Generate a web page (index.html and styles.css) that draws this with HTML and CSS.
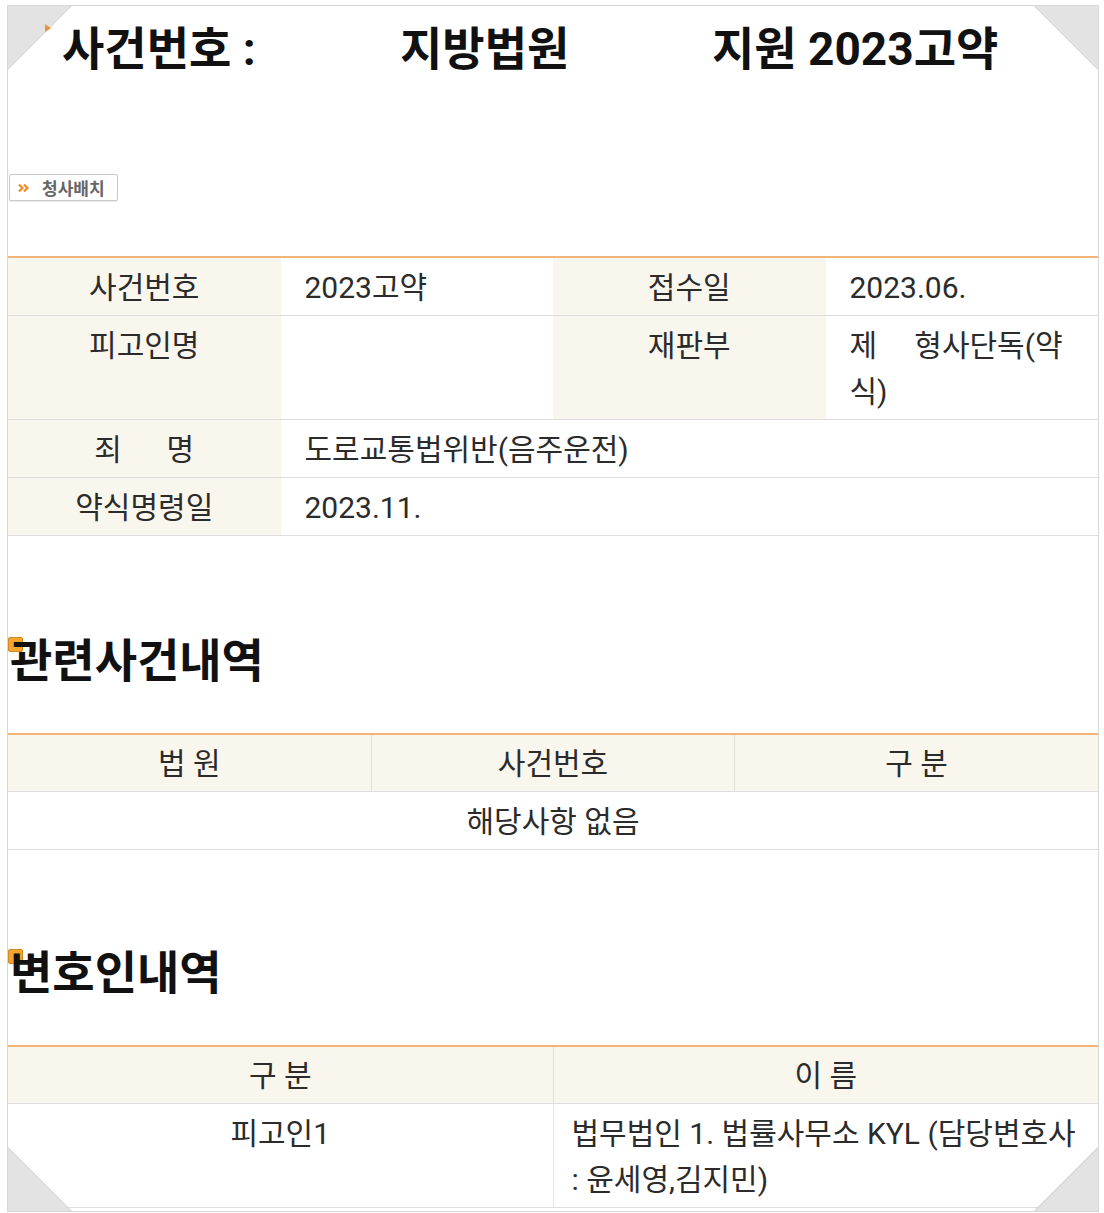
FILE: index.html
```html
<!DOCTYPE html>
<html lang="ko">
<head>
<meta charset="utf-8">
<title>사건번호</title>
<link rel="stylesheet" href="styles.css">
</head>
<body>
<div class="frame">
  <span class="corner tl"><svg width="66" height="66" viewBox="0 0 66 66"><polygon points="0.5,0.5 65,0.5 0.5,65" fill="#e3e3e3" stroke="#cfcfcf" stroke-width="1"/></svg></span>
  <span class="corner tr"><svg width="66" height="66" viewBox="0 0 66 66"><polygon points="1,0.5 65.5,0.5 65.5,65" fill="#e3e3e3" stroke="#cfcfcf" stroke-width="1"/></svg></span>
  <span class="corner bl"><svg width="66" height="66" viewBox="0 0 66 66"><polygon points="0.5,1 0.5,65.5 65,65.5" fill="#e3e3e3" stroke="#cfcfcf" stroke-width="1"/></svg></span>
  <span class="corner br"><svg width="66" height="66" viewBox="0 0 66 66"><polygon points="65.5,1 65.5,65.5 1,65.5" fill="#e3e3e3" stroke="#c4c4c4" stroke-width="1"/></svg></span>
  <span class="mark"></span>

  <h1 class="title">
    <span class="t1">사건번호 :</span>
    <span class="t2">지방법원</span>
    <span class="t3">지원 2023고약</span>
  </h1>

  <div class="btn-row">
    <span class="btn"><svg class="arr" width="12" height="10" viewBox="0 0 12 10"><path d="M1 1.5 L4.5 5 L1 8.5 M6 1.5 L9.5 5 L6 8.5" fill="none" stroke="#f08a24" stroke-width="2.2"/></svg>청사배치</span>
  </div>

  <table class="info">
    <colgroup><col class="c25"><col class="c25"><col class="c25"><col class="c25"></colgroup>
    <tr>
      <th>사건번호</th>
      <td>2023고약</td>
      <th>접수일</th>
      <td>2023.06.</td>
    </tr>
    <tr>
      <th>피고인명</th>
      <td></td>
      <th>재판부</th>
      <td>제&nbsp;&nbsp;&nbsp;&nbsp;&nbsp;형사단독(약식)</td>
    </tr>
    <tr>
      <th>죄&nbsp;&nbsp;&nbsp;&nbsp;&nbsp;&nbsp;명</th>
      <td colspan="3">도로교통법위반(음주운전)</td>
    </tr>
    <tr>
      <th>약식명령일</th>
      <td colspan="3">2023.11.</td>
    </tr>
  </table>

  <h2 class="sec first">관련사건내역</h2>

  <table class="list three">
    <tr>
      <th>법 원</th>
      <th>사건번호</th>
      <th>구 분</th>
    </tr>
    <tr>
      <td colspan="3" class="center">해당사항 없음</td>
    </tr>
  </table>

  <h2 class="sec">변호인내역</h2>

  <table class="list two">
    <tr>
      <th>구 분</th>
      <th>이 름</th>
    </tr>
    <tr>
      <td class="center">피고인1</td>
      <td class="left"><span class="nowrap">법무법인 1. 법률사무소 KYL (담당변호사</span><br>: 윤세영,김지민)</td>
    </tr>
  </table>
</div>
</body>
</html>
```

FILE: styles.css
```css
* { box-sizing: border-box; }

html, body {
  margin: 0;
  padding: 0;
  background: #ffffff;
}

body {
  font-family: Roboto, "Noto Sans CJK KR", "Noto Sans", sans-serif;
  color: #2b2b2b;
}

.frame {
  position: relative;
  margin: 5px 0 0 7px;
  width: 1092px;
  height: 1207px;
  border: 1px solid #d8d8d8;
  background: #ffffff;
  overflow: hidden;
}

.corner {
  position: absolute;
  width: 66px;
  height: 66px;
  z-index: 5;
  line-height: 0;
}
.corner svg { display: block; }
.corner.tl { left: -1px; top: -1px; }
.corner.tr { right: -1px; top: -1px; }
.corner.bl { left: -1px; bottom: -1px; }
.corner.br { right: -1px; bottom: -1px; }

.mark {
  position: absolute;
  left: 37px;
  top: 18px;
  width: 0;
  height: 0;
  border-top: 4px solid transparent;
  border-bottom: 4px solid transparent;
  border-left: 6px solid #e8943a;
  z-index: 6;
}

.title {
  display: flex;
  margin: 18px 0 0 0;
  padding-left: 54px;
  font-family: Roboto, "Noto Sans CJK KR", sans-serif;
  font-weight: 700;
  font-size: 46px;
  line-height: 50px;
  color: #111111;
  white-space: nowrap;
}
.title .t1 { width: 338px; }
.title .t2 { width: 312px; }

.btn-row {
  margin-top: 100px;
  height: 27px;
  padding-left: 1px;
}

.btn {
  display: inline-flex;
  align-items: center;
  height: 27px;
  width: 109px;
  padding-left: 8px;
  border: 1px solid #c9c9c9;
  border-radius: 2px;
  background: #ffffff;
  font-family: "Noto Sans CJK KR", sans-serif;
  font-weight: 700;
  font-size: 17px;
  color: #666666;
  box-shadow: 0 1px 1px rgba(0,0,0,0.08);
}
.btn .arr {
  display: block;
  margin-right: 12px;
  flex: none;
}

table {
  border-collapse: collapse;
  width: 1090px;
  table-layout: fixed;
  border-top: 2px solid #f3b47a;
}

th, td {
  font-size: 30px;
  line-height: 46px;
  font-weight: 400;
  border-bottom: 1px solid #dddddd;
  vertical-align: top;
  padding: 7px 0 4px 0;
}

.info {
  margin-top: 55px;
}
.info th {
  background: #f9f6ee;
  text-align: center;
  color: #2b2b2b;
}
.info td {
  text-align: left;
  padding-left: 24px;
  padding-right: 10px;
  background: #ffffff;
}

.sec {
  position: relative;
  z-index: 0;
  margin: 94px 0 51px 0;
  padding-left: 2px;
  font-family: "Noto Sans CJK KR", sans-serif;
  font-weight: 700;
  font-size: 46px;
  line-height: 50px;
  color: #111111;
}
.sec.first { margin-top: 96px; }
.sec::before {
  content: "";
  position: absolute;
  left: 0;
  top: 5px;
  width: 13px;
  height: 13px;
  border-radius: 2px;
  background: #f2a531;
  border: 1px solid #d9861a;
  z-index: -1;
}

.list th {
  background: #f9f6ee;
  text-align: center;
  padding: 6px 0 4px 0;
  border-left: 1px solid #e4e0d6;
}
.list th:first-child { border-left: none; }

.list td {
  text-align: center;
}
.list td.left {
  text-align: left;
  padding-left: 18px;
  padding-right: 4px;
  border-left: 1px solid #e4e4e4;
}
.nowrap { white-space: nowrap; }
```
